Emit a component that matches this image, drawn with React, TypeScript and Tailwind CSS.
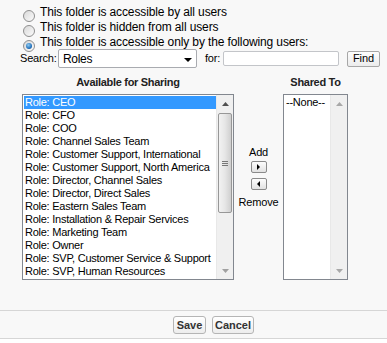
import React from "react";

const roles = [
  "Role: CEO",
  "Role: CFO",
  "Role: COO",
  "Role: Channel Sales Team",
  "Role: Customer Support, International",
  "Role: Customer Support, North America",
  "Role: Director, Channel Sales",
  "Role: Director, Direct Sales",
  "Role: Eastern Sales Team",
  "Role: Installation & Repair Services",
  "Role: Marketing Team",
  "Role: Owner",
  "Role: SVP, Customer Service & Support",
  "Role: SVP, Human Resources",
];

function Radio({ checked }: { checked?: boolean }) {
  return (
    <span className="relative mt-[5px] flex h-[12px] w-[12px] shrink-0 items-center justify-center rounded-full border border-[#8f8f8f] bg-gradient-to-br from-[#d9d9d9] to-[#fbfbfb]">
      {checked && (
        <span className="h-[6px] w-[6px] rounded-full bg-[radial-gradient(circle_at_40%_35%,#8fcbf2,#1f6db8_65%,#0f4683)]" />
      )}
    </span>
  );
}

function UpArrow({ color }: { color: string }) {
  return (
    <svg width="7" height="4" viewBox="0 0 7 4">
      <path d="M0 4 L3.5 0 L7 4 Z" fill={color} />
    </svg>
  );
}
function DownArrow({ color }: { color: string }) {
  return (
    <svg width="7" height="4" viewBox="0 0 7 4">
      <path d="M0 0 L3.5 4 L7 0 Z" fill={color} />
    </svg>
  );
}

export default function App() {
  const font = "font-['Liberation_Sans',Arial,sans-serif]";
  return (
    <div className={`w-[387px] h-[343px] bg-[#f8f8f8] text-black ${font} flex flex-col`}>
      {/* radios */}
      <div className="pt-[5px] pl-[23px] flex flex-col">
        {[
          ["This folder is accessible by all users", false],
          ["This folder is hidden from all users", false],
          ["This folder is accessible only by the following users:", true],
        ].map(([label, checked], i) => (
          <div key={i} className="flex h-[15px] items-start">
            <Radio checked={checked as boolean} />
            <span className="ml-[5px] text-[12px] leading-[15px] tracking-[-0.12px]">{label as string}</span>
          </div>
        ))}
      </div>

      {/* search row */}
      <div className="mt-[-1px] flex h-[19px] items-center pl-[20px]">
        <span className="text-[11px] tracking-[-0.2px] w-[38px]">Search:</span>
        <div className="flex h-[19px] w-[139px] items-center justify-between rounded-[2px] border border-[#a9abb0] bg-white pl-[4px] pr-[4px]">
          <span className="text-[12px] tracking-[-0.3px]">Roles</span>
          <svg width="8" height="4" viewBox="0 0 8 4" className="mt-[3px]">
            <path d="M0 0 L8 0 L4 4 Z" fill="#000" />
          </svg>
        </div>
        <span className="ml-[8px] w-[18px] text-[11px] tracking-[-0.2px]">for:</span>
        <div className="h-[15px] w-[116px] rounded-[2px] border border-[#c3c5c9] bg-white" />
        <button className="ml-[8px] flex h-[16px] w-[33px] items-center justify-center rounded-[2px] border border-[#a7a7a7] bg-gradient-to-b from-[#fdfdfd] to-[#ececec] text-[11px] tracking-[-0.1px]">
          Find
        </button>
      </div>

      {/* sharing table */}
      <div className="flex items-start pl-[22px]">
        {/* left column */}
        <div className="flex flex-col">
          <div className="pt-[8px] h-[20px] text-center text-[11px] leading-[12px] font-bold tracking-[-0.3px] text-[#222]">
            Available for Sharing
          </div>
          <div className="mt-[6px] flex h-[186px] w-[212px] border border-[#82878f] bg-white">
            <div className="flex w-[193px] flex-col py-[1px] pl-[1px]">
              {roles.map((r, i) => (
                <div
                  key={r}
                  className={`h-[13px] whitespace-nowrap pl-[1px] text-[11px] leading-[13px] tracking-[-0.25px] ${
                    i === 0 ? "bg-[#3399ff] text-white" : ""
                  }`}
                >
                  {r}
                </div>
              ))}
            </div>
            <div className="flex w-[17px] flex-col items-center border-l border-[#e8e8e8] bg-[#f0f0f0]">
              <div className="flex h-[17px] items-center justify-center">
                <UpArrow color="#505050" />
              </div>
              <div className="mt-[1px] flex h-[100px] w-[14px] items-center justify-center rounded-[2px] border border-[#979797] bg-gradient-to-r from-[#f2f2f2] via-[#e6e6e6] to-[#cfcfcf]">
                <div className="flex flex-col gap-[1px]">
                  <div className="h-[1px] w-[6px] bg-[#777]" />
                  <div className="h-[1px] w-[6px] bg-[#777]" />
                  <div className="h-[1px] w-[6px] bg-[#777]" />
                </div>
              </div>
              <div className="flex-1" />
              <div className="flex h-[17px] items-center justify-center">
                <DownArrow color="#a0a0a0" />
              </div>
            </div>
          </div>
        </div>

        {/* middle */}
        <div className="flex w-[49px] flex-col items-center pt-[78px]">
          <div className="h-[12px] text-[11px] leading-[12px] tracking-[-0.2px]">Add</div>
          <button className="mt-[3px] flex h-[12px] w-[16px] items-center justify-center rounded-[2px] border border-[#8a8a8a] bg-gradient-to-b from-[#fdfdfd] to-[#e2e2e2]">
            <svg width="3" height="6" viewBox="0 0 3 6">
              <path d="M0 0 L3 3 L0 6 Z" fill="#000" />
            </svg>
          </button>
          <button className="mt-[5px] flex h-[12px] w-[16px] items-center justify-center rounded-[2px] border border-[#8a8a8a] bg-gradient-to-b from-[#fdfdfd] to-[#e2e2e2]">
            <svg width="3" height="6" viewBox="0 0 3 6">
              <path d="M3 0 L0 3 L3 6 Z" fill="#000" />
            </svg>
          </button>
          <div className="mt-[6px] h-[12px] text-[11px] leading-[12px] tracking-[-0.2px]">Remove</div>
        </div>

        {/* right column */}
        <div className="flex flex-col">
          <div className="pt-[8px] h-[20px] text-center text-[11px] leading-[12px] font-bold tracking-[-0.3px] text-[#222]">
            Shared To
          </div>
          <div className="mt-[6px] flex h-[186px] w-[65px] border border-[#82878f] bg-white">
            <div className="flex w-[46px] flex-col py-[1px] pl-[2px]">
              <div className="h-[13px] whitespace-nowrap text-[11px] leading-[13px] tracking-[-0.25px]">--None--</div>
            </div>
            <div className="flex w-[17px] flex-col items-center border-l border-[#e8e8e8] bg-[#f0f0f0]">
              <div className="flex h-[17px] items-center justify-center">
                <UpArrow color="#a8a8a8" />
              </div>
              <div className="flex-1" />
              <div className="flex h-[17px] items-center justify-center">
                <DownArrow color="#a8a8a8" />
              </div>
            </div>
          </div>
        </div>
      </div>

      {/* footer */}
      <div className="mt-[30px] flex justify-center gap-[6px] border-t border-b border-[#d6d6d6] pt-[5px] pb-[4px] pl-[40px]">
        <button className="flex h-[18px] w-[33px] items-center justify-center rounded-[3px] border border-[#b5b5b5] bg-gradient-to-b from-[#ffffff] to-[#ededed] font-['Liberation_Sans_Narrow','Liberation_Sans',sans-serif] text-[11px] font-bold text-[#333]">
          Save
        </button>
        <button className="flex h-[18px] w-[42px] items-center justify-center rounded-[3px] border border-[#b5b5b5] bg-gradient-to-b from-[#ffffff] to-[#ededed] font-['Liberation_Sans_Narrow','Liberation_Sans',sans-serif] text-[11px] font-bold text-[#333]">
          Cancel
        </button>
      </div>
      <div className="flex-1 bg-white" />
    </div>
  );
}
